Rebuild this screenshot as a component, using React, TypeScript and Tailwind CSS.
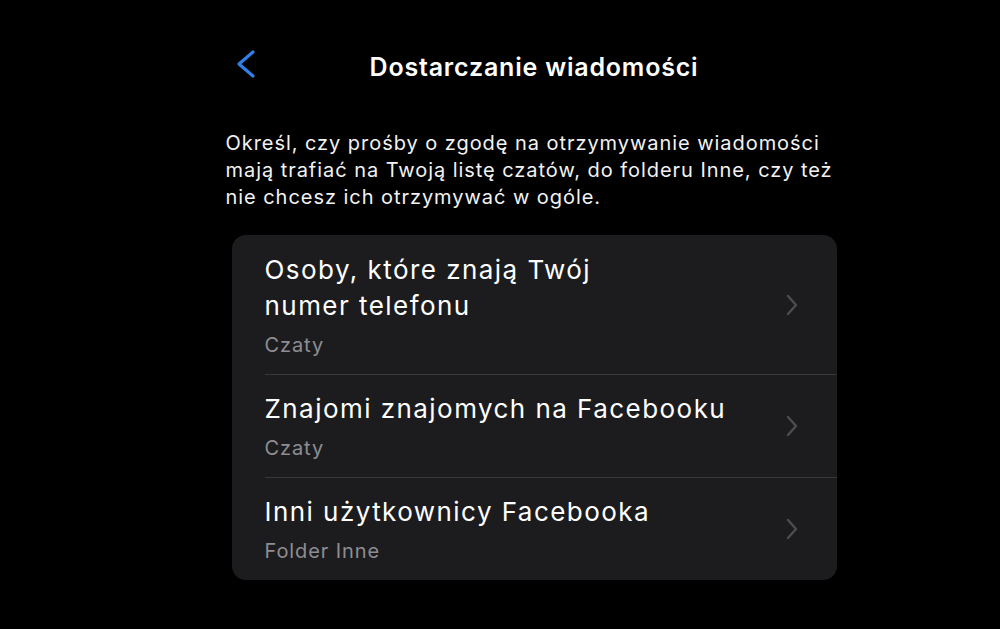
const ROWS = [
  { title: ['Osoby, które znają Twój', 'numer telefonu'], sub: 'Czaty' },
  { title: ['Znajomi znajomych na Facebooku'], sub: 'Czaty' },
  { title: ['Inni użytkownicy Facebooka'], sub: 'Folder Inne' },
];

function BackChevron() {
  return (
    <svg width="22" height="30" viewBox="0 0 22 30" fill="none" className="absolute left-[9px] top-[11px]">
      <path d="M18 3 L4 15 L18 27" stroke="#2f80e6" strokeWidth="3.2" strokeLinecap="round" strokeLinejoin="round" />
    </svg>
  );
}

function RowChevron() {
  return (
    <svg width="12" height="22" viewBox="0 0 12 22" fill="none" className="shrink-0">
      <path d="M2 2 L10 11 L2 20" stroke="#4d4d50" strokeWidth="2.4" strokeLinecap="round" strokeLinejoin="round" />
    </svg>
  );
}

export default function App() {
  return (
    <div
      className="w-[1000px] h-[629px] bg-black text-white overflow-hidden flex justify-center"
      style={{ fontFamily: 'Inter, "Liberation Sans", sans-serif' }}
    >
      <div className="w-[611px] ml-[62px] flex flex-col">
        {/* Header */}
        <div className="relative h-[60px] mt-[38px] flex items-center justify-center pl-[6px]">
          <BackChevron />
          <h1 className="text-[25px] font-semibold tracking-[0.8px]">Dostarczanie wiadomości</h1>
        </div>

        {/* Description */}
        <p className="mt-[32px] text-[20px] leading-[27px] text-[#f2f2f2] tracking-[0.95px] whitespace-nowrap">
          Określ, czy prośby o zgodę na otrzymywanie wiadomości
          <br />
          mają trafiać na Twoją listę czatów, do folderu Inne, czy też
          <br />
          nie chcesz ich otrzymywać w ogóle.
        </p>

        {/* Card */}
        <div className="mt-[24px] ml-[6px] w-[605px] rounded-[14px] bg-[#1c1c1e] pl-[33px]">
          {ROWS.map((row, i) => (
            <div key={row.sub + i} className={i < ROWS.length - 1 ? 'border-b border-[#38383a]' : ''}>
              <div className="flex items-center pr-[39px]">
                <div className={`flex-1 ${i === 0 ? 'pt-[17px]' : 'pt-[16px]'} ${i === ROWS.length - 1 ? 'pb-[15px]' : 'pb-[15px]'}`}>
                  {row.title.map(line => (
                    <div key={line} className="text-[26px] leading-[36px] text-white tracking-[1.45px] whitespace-nowrap">
                      {line}
                    </div>
                  ))}
                  <div className="text-[20px] leading-[28px] text-[#8d8d92] mt-[7px] tracking-[0.9px]">{row.sub}</div>
                </div>
                <RowChevron />
              </div>
            </div>
          ))}
        </div>
      </div>
    </div>
  );
}
